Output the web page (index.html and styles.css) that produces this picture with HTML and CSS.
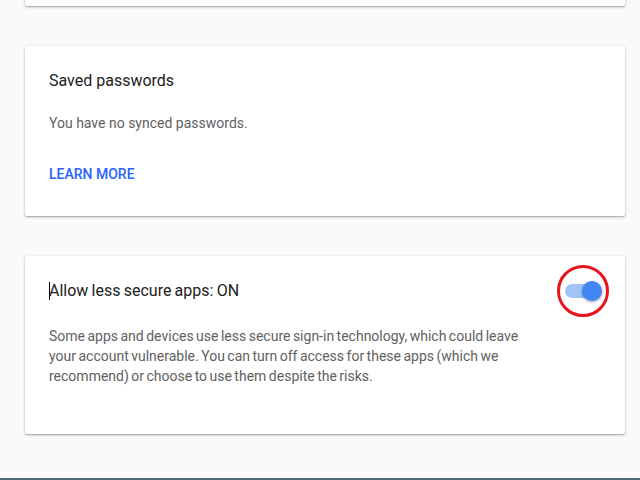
FILE: index.html
```html
<!DOCTYPE html>
<html>
<head>
<meta charset="utf-8">
<link rel="stylesheet" href="styles.css">
</head>
<body>
<div class="page">
  <div class="card card-top"></div>
  <div class="card card-pw">
    <h2 class="title">Saved passwords</h2>
    <p class="text">You have no synced passwords.</p>
    <a class="link" href="#">LEARN MORE</a>
  </div>
  <div class="card card-lsa">
    <div class="row">
      <h2 class="title tight"><span class="caret"></span>Allow less secure apps: ON</h2>
      <div class="toggle">
        <span class="track"></span>
        <span class="thumb"></span>
        <span class="ring"></span>
      </div>
    </div>
    <p class="text desc">Some apps and devices use less secure sign-in technology, which could leave your account vulnerable. You can turn off access for these apps (which we recommend) or choose to use them despite the risks.</p>
  </div>
</div>
<div class="bottom-bar"></div>
</body>
</html>
```
FILE: styles.css
```css
html, body {
  margin: 0;
  padding: 0;
  height: 480px;
  overflow: hidden;
  background: #fafafa;
  font-family: Roboto, "Liberation Sans", sans-serif;
}
.page {
  padding-left: 25px;
  width: 600px;
  display: flex;
  flex-direction: column;
  gap: 40px;
}
.card {
  background: #fff;
  border-radius: 2px;
  box-shadow: 0 1px 3px rgba(0,0,0,0.28), 0 1px 1px rgba(0,0,0,0.12);
  box-sizing: border-box;
}
.card-top {
  height: 100px;
  margin-top: -94px;
}
.card-pw {
  height: 170px;
  padding: 23px 24px 0 24px;
}
.card-lsa {
  height: 178px;
  padding: 23px 23px 0 24px;
}
.title {
  margin: 0;
  font-size: 16px;
  font-weight: 400;
  line-height: 24px;
  color: #212121;
}
.tight {
  word-spacing: -0.75px;
}
.text {
  margin: 20px 0 0 0;
  font-size: 14px;
  line-height: 20px;
  color: #616161;
}
.link {
  display: block;
  margin-top: 31px;
  font-size: 14px;
  line-height: 20px;
  font-weight: 500;
  color: #2962ff;
  text-decoration: none;
}
.row {
  display: flex;
  align-items: center;
  justify-content: space-between;
}
.caret {
  display: inline-block;
  width: 1px;
  height: 18px;
  background: #000;
  vertical-align: -4px;
  margin-right: -1px;
}
.desc {
  margin-top: 23px;
  width: 480px;
  word-spacing: -1px;
}
.toggle {
  position: relative;
  width: 37px;
  height: 20px;
}
.track {
  position: absolute;
  left: 0;
  top: 3px;
  width: 34px;
  height: 14px;
  border-radius: 7px;
  background: #a0c3fa;
}
.thumb {
  position: absolute;
  right: 0;
  top: 0;
  width: 20px;
  height: 20px;
  border-radius: 50%;
  background: #4285f4;
  box-shadow: 0 1px 3px rgba(0,0,0,0.4);
}
.ring {
  position: absolute;
  left: -8px;
  top: -16px;
  width: 52px;
  height: 52px;
  box-sizing: border-box;
  border: 3.5px solid #e8141c;
  border-radius: 50%;
}
.bottom-bar {
  position: fixed;
  left: 0;
  right: 0;
  bottom: 0;
  height: 2px;
  background: #526a78;
}
```
